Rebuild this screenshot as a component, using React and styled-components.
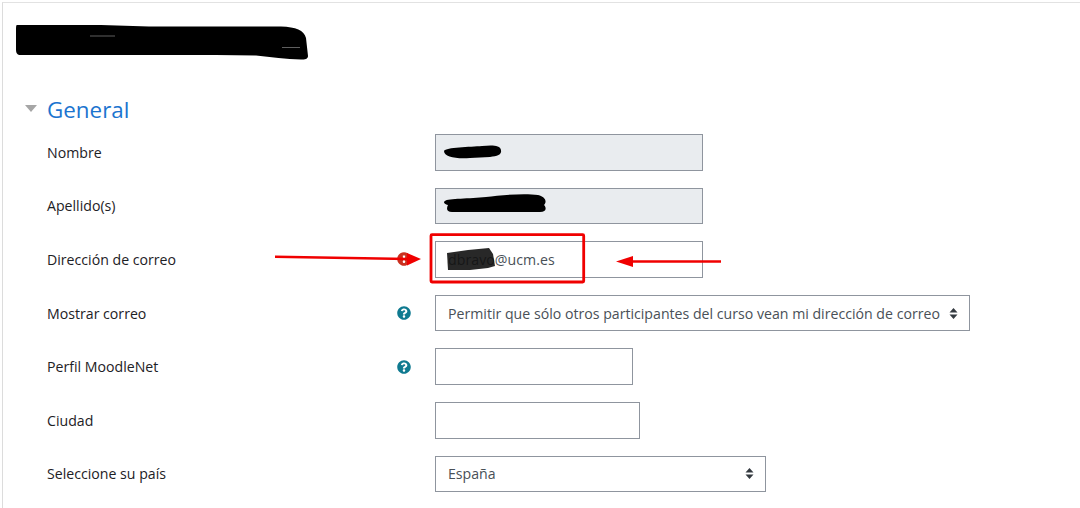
import React from "react";
import styled, { createGlobalStyle } from "styled-components";
import { FaQuestionCircle, FaExclamationCircle } from "react-icons/fa";

const Global = createGlobalStyle`
  html, body { margin: 0; padding: 0; background: #fff; }
  body { font-family: "Open Sans", "Noto Sans", sans-serif; overflow: hidden; }
  #root { width: 1080px; height: 508px; overflow: hidden; position: relative; }
`;

const Panel = styled.main`
  margin: 2px 0 0 2px;
  height: 506px;
  box-sizing: border-box;
  border-top: 1px solid #e2e2e2;
  border-left: 1px solid #dcdcdc;
  padding: 21px 0 0 13px;
`;

const TitleScribble = styled.svg`
  display: block;
  width: 296px;
  height: 38px;
`;

const SectionHeader = styled.header`
  display: flex;
  align-items: center;
  margin-top: 32px;
  height: 32px;
`;

const Caret = styled.svg`
  width: 12px;
  height: 7px;
  margin: 0 10px 4px 9px;
  flex: none;
`;

const SectionTitle = styled.h2`
  margin: 0;
  font-size: 22.4px;
  line-height: 32px;
  font-weight: 400;
  color: #1b74cf;
`;

const Fields = styled.div`
  display: flex;
  flex-direction: column;
  gap: 17px;
  margin-top: 8px;
`;

const Row = styled.div`
  display: grid;
  grid-template-columns: 349.5px 38.5px auto;
  align-items: center;
  height: 36.6px;
  padding-left: 31px;
`;

const Label = styled.label`
  font-size: 14.15px;
  color: #1d2125;
`;

const IconSlot = styled.span`
  display: flex;
  font-size: 14px;
  color: ${(p) => p.$color};
`;

const Input = styled.input`
  box-sizing: border-box;
  display: block;
  width: ${(p) => p.$w}px;
  height: 36.6px;
  padding: 0 12px;
  border: 1px solid #8f959e;
  border-radius: 0;
  outline: none;
  font: 14.15px "Open Sans", "Noto Sans", sans-serif;
  letter-spacing: 0.05px;
  color: #495057;
  background: ${(p) => (p.disabled ? "#e9ecef" : "#fff")};
`;

const SelectBox = styled.div`
  box-sizing: border-box;
  display: flex;
  align-items: center;
  justify-content: space-between;
  width: ${(p) => p.$w}px;
  height: 36.6px;
  padding: 0 12px;
  border: 1px solid #8f959e;
  font-size: 14.15px;
  color: #495057;
  white-space: nowrap;
`;

const Updown = styled.svg`
  width: 9px;
  height: 11px;
  flex: none;
  margin-right: -1px;
`;

const Annotations = styled.svg`
  position: absolute;
  left: 0;
  top: 0;
  width: 1080px;
  height: 508px;
  pointer-events: none;
`;

const Arrows = () => (
  <Updown viewBox="0 0 9 11">
    <path d="M4.5 0 8.5 4.5H.5zM4.5 11 .5 6.5h8z" fill="#343a40" />
  </Updown>
);

const Help = () => (
  <IconSlot $color="#0f7a90"><FaQuestionCircle /></IconSlot>
);

export default function App() {
  return (
    <>
      <Global />
      <Panel>
        <TitleScribble viewBox="0 0 296 38">
          <path
            d="M1 1 H85 L133 2.5 H265 C280 3 288 6 290 14 L292 32 C292 35 289 35.5 285 35.5 C270 35 255 33 240 31.5 L200 31 H5 C1 31 0 29 0 25 V6 C0 3 0 1 1 1Z"
            fill="#000"
          />
          <path d="M74 12 H99 M266 23.5 H284" stroke="#777" strokeWidth="0.8" fill="none" />
        </TitleScribble>
        <SectionHeader>
          <Caret viewBox="0 0 12 7"><path d="M0 0h12L6 7z" fill="#a6a6a6" /></Caret>
          <SectionTitle>General</SectionTitle>
        </SectionHeader>
        <Fields>
          <Row>
            <Label>Nombre</Label><span />
            <Input $w={268} disabled />
          </Row>
          <Row>
            <Label>Apellido(s)</Label><span />
            <Input $w={268} disabled />
          </Row>
          <Row>
            <Label>Dirección de correo</Label>
            <IconSlot $color="#ca3120"><FaExclamationCircle /></IconSlot>
            <Input $w={268} readOnly value="dbravo@ucm.es" />
          </Row>
          <Row>
            <Label>Mostrar correo</Label>
            <Help />
            <SelectBox $w={535}>
              Permitir que sólo otros participantes del curso vean mi dirección de correo
              <Arrows />
            </SelectBox>
          </Row>
          <Row>
            <Label>Perfil MoodleNet</Label>
            <Help />
            <Input $w={198} />
          </Row>
          <Row>
            <Label>Ciudad</Label><span />
            <Input $w={205} />
          </Row>
          <Row>
            <Label>Seleccione su país</Label><span />
            <SelectBox $w={331}>España<Arrows /></SelectBox>
          </Row>
        </Fields>
      </Panel>
      <Annotations viewBox="0 0 1080 508">
        <path d="M444 151 C446 147 470 147 482 146 C492 145 500 145 501 150 C502 155 497 156 490 157 L470 158 C456 159 444 157 444 151Z" fill="#000" />
        <path d="M445 201 C448 198 470 199 486 197 C500 195 525 193 538 195 C546 197 547 202 544 205 C547 208 546 212 540 212 H452 C447 212 446 209 448 205 C444 204 443 202 445 201Z" fill="#000" />
        <path d="M447 253 L468 250 L489 248 L493 254 L495 266 L488 268 L470 270 L448 270Z" fill="#111" opacity="0.9" />
        <rect x="431" y="234.7" width="152.7" height="47.3" fill="none" stroke="#f00000" strokeWidth="2.8" rx="1" />
        <path d="M275 256.7 L408 259" stroke="#f00000" strokeWidth="2.4" fill="none" />
        <path d="M421 259 L407 253 V265.5Z" fill="#f00000" />
        <path d="M721 261.5 H632" stroke="#f00000" strokeWidth="2.4" fill="none" />
        <path d="M616 261.5 L633 256 V267Z" fill="#f00000" />
      </Annotations>
    </>
  );
}
